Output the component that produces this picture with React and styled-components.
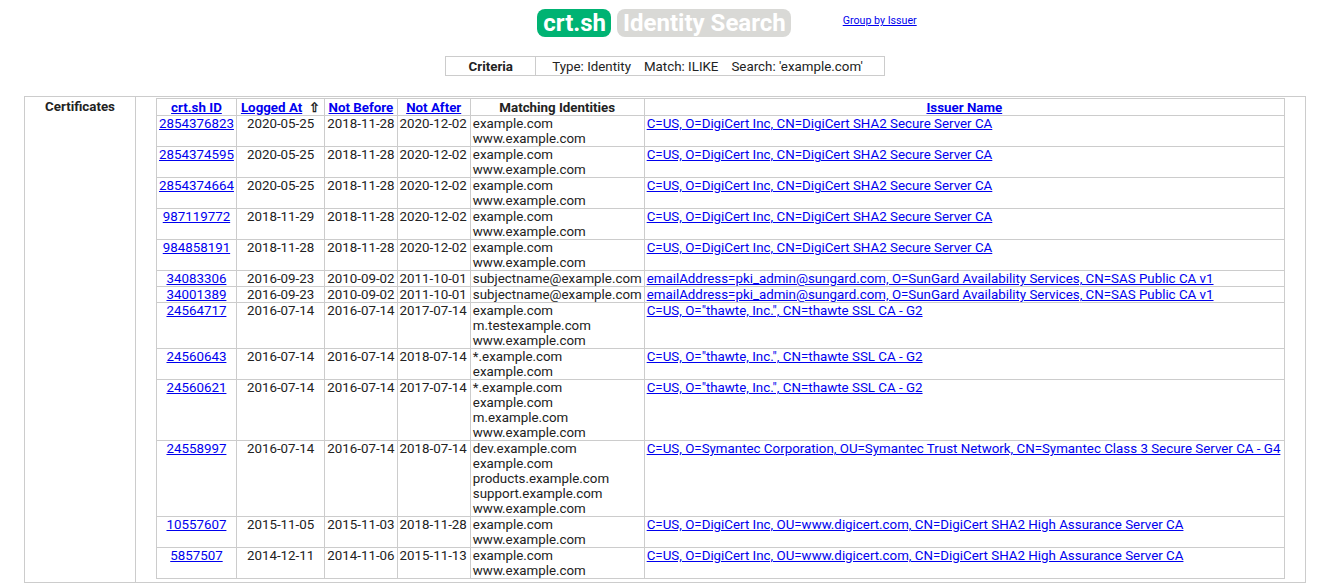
import styled, { createGlobalStyle } from "styled-components";

const GlobalStyle = createGlobalStyle`
    body {
        margin: 8px;
        font-family: Roboto, "Liberation Sans", sans-serif;
        font-size: 13.33px;
        line-height: 15px;
        color: #222222;
        background: #ffffff;
    }
    a {
        color: #0000ee;
    }
`

const Header = styled.div`
    display: flex;
    align-items: center;
    justify-content: center;
    padding: 1px 0 0 0;
    margin-left: 18px;
`

const Pill = styled.span`
    font-size: 24px;
    line-height: 28px;
    font-weight: bold;
    color: #ffffff;
    background: ${(p) => p.grey ? '#d9d9d6' : '#00b373'};
    border-radius: 8px;
    padding: 0 5px 0 6px;
    margin-right: 6px;
`

const GroupLink = styled.a`
    font-size: 10.67px;
    line-height: 12px;
    margin-left: 46px;
    margin-right: -160px;
    width: 116px;
    align-self: flex-start;
    margin-top: 6px;
`

const Criteria = styled.table`
    margin: 19px auto 0 auto;
    position: relative;
    left: 6px;
    border-collapse: collapse;
    border: 1px solid #cccccc;
    th, td {
        border: 1px solid #cccccc;
        padding: 2px 2px 1px 2px;
    }
    th {
        width: 85px;
    }
    td {
        padding: 2px 21px 1px 16px;
    }
`

const Gap = styled.span`
    display: inline-block;
    width: 13px;
`

const Outer = styled.table`
    margin: 20px 0 0 16px;
    width: 1282px;
    border-collapse: collapse;
    border: 1px solid #cccccc;
    > tbody > tr > th {
        width: 106px;
        vertical-align: top;
        padding: 2px 2px;
        border: 1px solid #cccccc;
    }
    > tbody > tr > td {
        padding: 1px 20px 3px 20px;
        border: 1px solid #cccccc;
    }
`

const Lines = styled.table`
    width: 100%;
    border-collapse: collapse;
    border: 1px solid #cccccc;
    td {
        border: 1px solid #cccccc;
        vertical-align: top;
        white-space: nowrap;
    }
`

const HeadCell = styled.th`
    border: 1px solid #cccccc;
    padding: 1px ${(p) => p.right || 2}px 0 ${(p) => p.left || 2}px;
    white-space: nowrap;
`

const Cell = styled.td`
    text-align: ${(p) => p.center ? 'center' : 'left'};
    width: ${(p) => p.wide ? '100%' : 'auto'};
    padding: 0 ${(p) => p.right || 2}px 0 2px;
`

const Arrow = styled.span`
    margin-left: 7px;
    margin-right: 2px;
`

const rows = [
    ["2854376823", "2020-05-25", "2018-11-28", "2020-12-02", ["example.com", "www.example.com"], "C=US, O=DigiCert Inc, CN=DigiCert SHA2 Secure Server CA"],
    ["2854374595", "2020-05-25", "2018-11-28", "2020-12-02", ["example.com", "www.example.com"], "C=US, O=DigiCert Inc, CN=DigiCert SHA2 Secure Server CA"],
    ["2854374664", "2020-05-25", "2018-11-28", "2020-12-02", ["example.com", "www.example.com"], "C=US, O=DigiCert Inc, CN=DigiCert SHA2 Secure Server CA"],
    ["987119772", "2018-11-29", "2018-11-28", "2020-12-02", ["example.com", "www.example.com"], "C=US, O=DigiCert Inc, CN=DigiCert SHA2 Secure Server CA"],
    ["984858191", "2018-11-28", "2018-11-28", "2020-12-02", ["example.com", "www.example.com"], "C=US, O=DigiCert Inc, CN=DigiCert SHA2 Secure Server CA"],
    ["34083306", "2016-09-23", "2010-09-02", "2011-10-01", ["subjectname@example.com"], "emailAddress=pki_admin@sungard.com, O=SunGard Availability Services, CN=SAS Public CA v1"],
    ["34001389", "2016-09-23", "2010-09-02", "2011-10-01", ["subjectname@example.com"], "emailAddress=pki_admin@sungard.com, O=SunGard Availability Services, CN=SAS Public CA v1"],
    ["24564717", "2016-07-14", "2016-07-14", "2017-07-14", ["example.com", "m.testexample.com", "www.example.com"], "C=US, O=\"thawte, Inc.\", CN=thawte SSL CA - G2"],
    ["24560643", "2016-07-14", "2016-07-14", "2018-07-14", ["*.example.com", "example.com"], "C=US, O=\"thawte, Inc.\", CN=thawte SSL CA - G2"],
    ["24560621", "2016-07-14", "2016-07-14", "2017-07-14", ["*.example.com", "example.com", "m.example.com", "www.example.com"], "C=US, O=\"thawte, Inc.\", CN=thawte SSL CA - G2"],
    ["24558997", "2016-07-14", "2016-07-14", "2018-07-14", ["dev.example.com", "example.com", "products.example.com", "support.example.com", "www.example.com"], "C=US, O=Symantec Corporation, OU=Symantec Trust Network, CN=Symantec Class 3 Secure Server CA - G4"],
    ["10557607", "2015-11-05", "2015-11-03", "2018-11-28", ["example.com", "www.example.com"], "C=US, O=DigiCert Inc, OU=www.digicert.com, CN=DigiCert SHA2 High Assurance Server CA"],
    ["5857507", "2014-12-11", "2014-11-06", "2015-11-13", ["example.com", "www.example.com"], "C=US, O=DigiCert Inc, OU=www.digicert.com, CN=DigiCert SHA2 High Assurance Server CA"],
]

export default function App() {
    return (
        <>
            <GlobalStyle />
            <Header>
                <Pill>crt.sh</Pill>
                <Pill grey>Identity Search</Pill>
                <GroupLink href="#">Group by Issuer</GroupLink>
            </Header>
            <Criteria>
                <tbody>
                    <tr>
                        <th>Criteria</th>
                        <td>Type: Identity<Gap />Match: ILIKE<Gap />Search: 'example.com'</td>
                    </tr>
                </tbody>
            </Criteria>
            <Outer>
                <tbody>
                    <tr>
                        <th>Certificates</th>
                        <td>
                            <Lines>
                                <tbody>
                                    <tr>
                                        <HeadCell><a href="#">crt.sh ID</a></HeadCell>
                                        <HeadCell left={4}><a href="#">Logged At</a><Arrow>&#8679;</Arrow></HeadCell>
                                        <HeadCell><a href="#">Not Before</a></HeadCell>
                                        <HeadCell><a href="#">Not After</a></HeadCell>
                                        <HeadCell>Matching Identities</HeadCell>
                                        <HeadCell><a href="#">Issuer Name</a></HeadCell>
                                    </tr>
                                    {rows.map((r) => (
                                        <tr key={r[0]}>
                                            <Cell center><a href="#">{r[0]}</a></Cell>
                                            <Cell center>{r[1]}</Cell>
                                            <Cell>{r[2]}</Cell>
                                            <Cell right={3}>{r[3]}</Cell>
                                            <Cell>{r[4].map((n, i) => (
                                                <span key={i}>{i > 0 && <br />}{n}</span>
                                            ))}</Cell>
                                            <Cell wide><a href="#">{r[5]}</a></Cell>
                                        </tr>
                                    ))}
                                </tbody>
                            </Lines>
                        </td>
                    </tr>
                </tbody>
            </Outer>
        </>
    )
}
